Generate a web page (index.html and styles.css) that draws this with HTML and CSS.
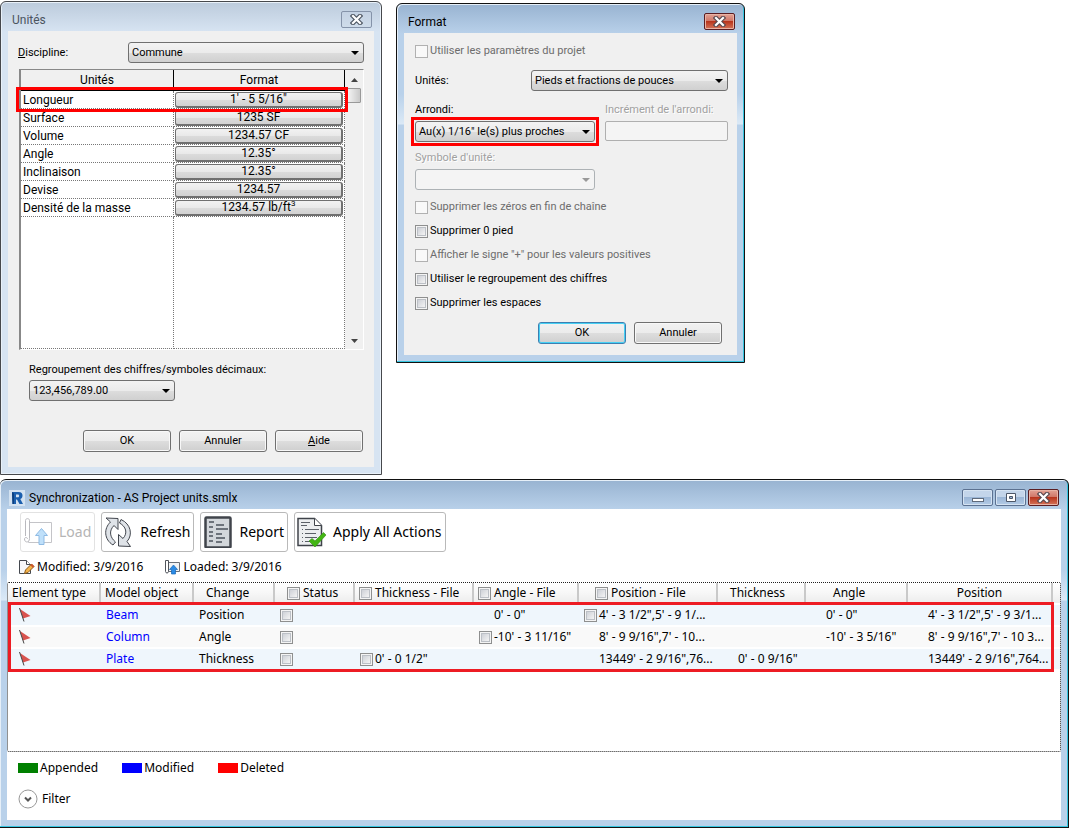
FILE: index.html
```html
<!DOCTYPE html>
<html lang="fr">
<head>
    <meta charset="UTF-8">
    <meta name="viewport" content="width=device-width, initial-scale=1.0">
    <title>Synchronization - AS Project units</title>
    <link rel="stylesheet" href="styles.css">
</head>
<body>

    <div class="dialogs">
        <section class="window inactive units">
            <header class="titlebar">
                <h2>Unités</h2>
                <button class="win-btn" aria-label="Fermer">
                    <svg width="13" height="11" viewBox="0 0 13 11"><path d="M3 2l7 7M10 2L3 9" stroke="#4f5864" stroke-width="4.500" stroke-linecap="square"/><path d="M3 2l7 7M10 2L3 9" stroke="#fff" stroke-width="2.200" stroke-linecap="square"/></svg>
                </button>
            </header>
            <div class="client">
                <div class="field">
                    <label for="discipline"><u>D</u>iscipline:</label>
                    <select id="discipline"><option>Commune</option></select>
                </div>

                <div class="grid-box">
                    <table class="units-table">
                        <thead>
                            <tr><th>Unités</th><th>Format</th></tr>
                        </thead>
                        <tbody>
                            <tr class="marked"><td>Longueur</td><td><button>1' - 5 5/16"</button></td></tr>
                            <tr><td>Surface</td><td><button>1235 SF</button></td></tr>
                            <tr><td>Volume</td><td><button>1234.57 CF</button></td></tr>
                            <tr><td>Angle</td><td><button>12.35°</button></td></tr>
                            <tr><td>Inclinaison</td><td><button>12.35°</button></td></tr>
                            <tr><td>Devise</td><td><button>1234.57</button></td></tr>
                            <tr><td>Densité de la masse</td><td><button>1234.57 lb/ft<sup>3</sup></button></td></tr>
                            <tr class="filler"><td></td><td></td></tr>
                        </tbody>
                    </table>
                    <div class="scrollbar">
                        <svg width="7" height="4" viewBox="0 0 7 4"><path d="M0 4L3.500 0 7 4z" fill="#444"/></svg>
                        <div class="thumb"></div>
                        <svg width="7" height="4" viewBox="0 0 7 4"><path d="M0 0h7L3.500 4z" fill="#444"/></svg>
                    </div>
                </div>

                <div class="grouping">
                    <label for="grouping">Re<u>g</u>roupement des chiffres/symboles décimaux:</label>
                    <select id="grouping"><option>123,456,789.00</option></select>
                </div>

                <div class="actions">
                    <button class="btn">OK</button>
                    <button class="btn">Annuler</button>
                    <button class="btn"><u>A</u>ide</button>
                </div>
            </div>
        </section>

        <section class="window format">
            <header class="titlebar">
                <h2>Format</h2>
                <button class="win-btn close" aria-label="Fermer">
                    <svg width="13" height="11" viewBox="0 0 13 11"><path d="M3 2l7 7M10 2L3 9" stroke="#5a4a50" stroke-width="4.500" stroke-linecap="square"/><path d="M3 2l7 7M10 2L3 9" stroke="#fff" stroke-width="2.200" stroke-linecap="square"/></svg>
                </button>
            </header>
            <div class="client">
                <label class="check off"><input type="checkbox" disabled>Utiliser les paramètres du projet</label>
                <div class="field">
                    <label for="unites">Unités:</label>
                    <select id="unites"><option>Pieds et fractions de pouces</option></select>
                </div>
                <div class="rounding">
                    <div class="stack">
                        <label for="arrondi">Arrondi:</label>
                        <div class="marked">
                            <select id="arrondi"><option>Au(x) 1/16" le(s) plus proches</option></select>
                        </div>
                    </div>
                    <div class="stack">
                        <label class="faded" for="increment">Incrément de l'arrondi:</label>
                        <input id="increment" type="text" disabled>
                    </div>
                    <div class="stack">
                        <label class="faded" for="symbole">Symbole d'unité:</label>
                        <select id="symbole" disabled></select>
                    </div>
                </div>
                <div class="checks">
                    <label class="check off"><input type="checkbox" disabled>Supprimer les zéros en fin de chaîne</label>
                    <label class="check"><input type="checkbox">Supprimer 0 pied</label>
                    <label class="check off"><input type="checkbox" disabled>Afficher le signe "+" pour les valeurs positives</label>
                    <label class="check"><input type="checkbox">Utiliser le regroupement des chiffres</label>
                    <label class="check"><input type="checkbox">Supprimer les espaces</label>
                </div>
                <div class="actions">
                    <button class="btn default">OK</button>
                    <button class="btn">Annuler</button>
                </div>
            </div>
        </section>
    </div>

    <section class="window sync" lang="en">
        <header class="titlebar">
            <svg class="logo" width="16" height="16" viewBox="0 0 16 16">
                <path d="M0 0h16v16H0z" fill="#d3e2f1"/>
                <path d="M3 2h6.500c3 0 4 1.800 4 3.600S12.800 8.600 11.300 9L14 14h-3.500L8 9.500H7V14H3.500z" fill="#1b5fae"/>
                <path d="M7 4.500h2c1.500 0 1.500 2.800 0 2.800H7z" fill="#d3e2f1"/>
                <path d="M3 2l2 1.500V14H3.500z" fill="#0c3f7f"/>
            </svg>
            <h2>Synchronization - AS Project units.smlx</h2>
            <div class="win-btns">
                <button class="win-btn blue" aria-label="Minimize">
                    <svg width="12" height="10" viewBox="0 0 12 10"><rect x=".5" y="5.500" width="11" height="3" fill="#fff" stroke="#5f6b7c"/></svg>
                </button>
                <button class="win-btn blue" aria-label="Maximize">
                    <svg width="12" height="10" viewBox="0 0 12 10"><path d="M1.500 .5h9v8h-9zM4.500 3.500v2h3v-2z" fill="#fff" fill-rule="evenodd" stroke="#4c5768"/></svg>
                </button>
                <button class="win-btn close" aria-label="Close">
                    <svg width="13" height="11" viewBox="0 0 13 11"><path d="M3 2l7 7M10 2L3 9" stroke="#5a4a50" stroke-width="4.500" stroke-linecap="square"/><path d="M3 2l7 7M10 2L3 9" stroke="#fff" stroke-width="2.200" stroke-linecap="square"/></svg>
                </button>
            </div>
        </header>
        <div class="client">
            <div class="toolbar">
                <button class="tool" disabled>
                    <svg width="32" height="32" viewBox="0 0 32 32">
                        <path d="M6.500 6.500h23v20h-23z" fill="#fff" stroke="#c4c4c8"/>
                        <path d="M3.500 4.500c0-2.500 4-2.500 4 0v18c0 4.500-5 4.500-5 .5 0-2 3-2 3 0" fill="#fff" stroke="#b9b9be"/>
                        <path d="M3.500 4.500V20" stroke="#b9b9be"/>
                        <path d="M19.500 12.500l6 7h-3.500v9h-5v-9h-3.500z" fill="#bfe0fa" stroke="#8fbbe4"/>
                    </svg>
                    Load
                </button>
                <button class="tool">
                    <svg width="32" height="32" viewBox="0 0 32 32">
                        <path d="M3 2l12 .5v11l-4-4C5.500 15 7 21.500 12.500 26l-2.500 3C1 23.500.5 12.500 7.500 6z" fill="#dfe3e8" stroke="#42464e" stroke-linejoin="round"/>
                        <path d="M18 3.500c10 4.500 12 15.500 6 22l3.500 5-12-.5V18.500l4.500 4C25 17 23 10.500 16.500 7z" fill="#dfe3e8" stroke="#42464e" stroke-linejoin="round"/>
                    </svg>
                    Refresh
                </button>
                <button class="tool">
                    <svg width="32" height="32" viewBox="0 0 32 32">
                        <rect x="3.500" y="1.500" width="25" height="30" rx="1" fill="#d3d7db" stroke="#40444b" stroke-width="2.500"/>
                        <path d="M7 6h5M14 9h8M7 11h4M14 13h12M7 16h4M7 20h4M14 18h6M14 22h9M7 25h4M14 26h6" stroke="#6d737b" stroke-width="2"/>
                    </svg>
                    Report
                </button>
                <button class="tool">
                    <svg width="32" height="32" viewBox="0 0 32 32">
                        <path d="M2 2.500h16.500l7 7v20H2z" fill="#eceef0" stroke="#3f434a" stroke-width="1.500"/>
                        <path d="M18.500 2.500v7h7" fill="#fff" stroke="#3f434a"/>
                        <path d="M5 6.500h9M5 9.500h6M9 13.500h14M9 17.500h11M9 21.500h12M9 25.500h6" stroke="#5b6068"/>
                        <path d="M6.500 13v14" stroke="#5b6068" stroke-dasharray="1 3"/>
                        <path d="M13 25l3-2.500 3 2.500 8.500-8.500 2.500 2.500-11 12z" fill="#43b514" stroke="#2f8d0c" stroke-width=".6"/>
                    </svg>
                    Apply All Actions
                </button>
            </div>

            <div class="status">
                <span class="stamp">
                    <svg width="17" height="16" viewBox="0 0 17 16">
                        <path d="M1.500 1.500h7l4 4v9h-11z" fill="#f6f7f9" stroke="#44484f"/>
                        <path d="M8.500 1.500v4h4" fill="#fff" stroke="#44484f"/>
                        <path d="M6.500 14.500l1-3.500 6-6 2.500 2.500-6 6z" fill="#f3b34a" stroke="#8b5a1c"/>
                        <path d="M13 5.500l2.500 2.500" stroke="#d0562c" stroke-width="2"/>
                    </svg>
                    Modified: 3/9/2016
                </span>
                <span class="stamp">
                    <svg width="17" height="16" viewBox="0 0 17 16">
                        <path d="M3.500 3.500h12v9h-12z" fill="#f1f3f5" stroke="#6b7078"/>
                        <path d="M1.500 1.500h3v11c0 2-3 2-3 0z" fill="#fff" stroke="#50545b"/>
                        <path d="M9.500 6l4 4.500h-2V15h-4v-4.500h-2z" fill="#2b8be6" stroke="#1767b8" stroke-width=".7"/>
                    </svg>
                    Loaded: 3/9/2016
                </span>
            </div>

            <div class="list">
                <table class="sync-table">
                    <colgroup>
                        <col class="w-type"><col class="w-model"><col class="w-change"><col class="w-status">
                        <col class="w-thick-file"><col class="w-angle-file"><col class="w-pos-file">
                        <col class="w-thick"><col class="w-angle"><col class="w-pos"><col>
                    </colgroup>
                    <thead>
                        <tr>
                            <th>Element type</th>
                            <th>Model object</th>
                            <th class="mid">Change</th>
                            <th class="mid"><label><input type="checkbox">Status</label></th>
                            <th><label><input type="checkbox">Thickness - File</label></th>
                            <th><label><input type="checkbox">Angle - File</label></th>
                            <th class="wide"><label><input type="checkbox">Position - File</label></th>
                            <th class="mid">Thickness</th>
                            <th class="far">Angle</th>
                            <th class="center">Position</th>
                            <th></th>
                        </tr>
                    </thead>
                    <tbody>
                        <tr>
                            <td class="flag"><svg width="12" height="14" viewBox="0 0 12 14"><path d="M1 1l10.500 7L4 10.500z" fill="#d9534f"/><path d="M.5 0L5 13.500" stroke="#444"/></svg></td>
                            <td><span class="modified">Beam</span></td>
                            <td>Position</td>
                            <td><input type="checkbox" aria-label="Status Beam"></td>
                            <td></td>
                            <td class="text">0' - 0"</td>
                            <td><label><input type="checkbox">4' - 3 1/2",5' - 9 1/...</label></td>
                            <td></td>
                            <td class="text">0' - 0"</td>
                            <td class="text">4' - 3 1/2",5' - 9 3/1...</td>
                            <td></td>
                        </tr>
                        <tr>
                            <td class="flag"><svg width="12" height="14" viewBox="0 0 12 14"><path d="M1 1l10.500 7L4 10.500z" fill="#d9534f"/><path d="M.5 0L5 13.500" stroke="#444"/></svg></td>
                            <td><span class="modified">Column</span></td>
                            <td>Angle</td>
                            <td><input type="checkbox" aria-label="Status Column"></td>
                            <td></td>
                            <td><label><input type="checkbox">-10' - 3 11/16"</label></td>
                            <td class="text">8' - 9 9/16",7' - 10...</td>
                            <td></td>
                            <td class="text">-10' - 3 5/16"</td>
                            <td class="text">8' - 9 9/16",7' - 10 3...</td>
                            <td></td>
                        </tr>
                        <tr>
                            <td class="flag"><svg width="12" height="14" viewBox="0 0 12 14"><path d="M1 1l10.500 7L4 10.500z" fill="#d9534f"/><path d="M.5 0L5 13.500" stroke="#444"/></svg></td>
                            <td><span class="modified">Plate</span></td>
                            <td>Thickness</td>
                            <td><input type="checkbox" aria-label="Status Plate"></td>
                            <td><label><input type="checkbox">0' - 0 1/2"</label></td>
                            <td></td>
                            <td class="text">13449' - 2 9/16",76...</td>
                            <td class="text">0' - 0 9/16"</td>
                            <td></td>
                            <td class="text">13449' - 2 9/16",764...</td>
                            <td></td>
                        </tr>
                    </tbody>
                </table>
            </div>

            <ul class="legend">
                <li class="appended">Appended</li>
                <li class="changed">Modified</li>
                <li class="deleted">Deleted</li>
            </ul>

            <button class="filter">
                <svg width="20" height="20" viewBox="0 0 20 20"><circle cx="10" cy="10" r="9" fill="#fff" stroke="#999"/><path d="M7 8.500l3 3 3-3" fill="none" stroke="#555" stroke-width="2"/></svg>
                Filter
            </button>
        </div>
    </section>

</body>
</html>
```
FILE: styles.css
```css
* {
    box-sizing: border-box;
    margin: 0;
    padding: 0;
}

body {
    background-color: #fff;
    color: #000;
    font-family: Roboto, sans-serif;
    font-size: 11px;
    line-height: 14px;
}

button,
select,
input {
    font: inherit;
    color: inherit;
}

.dialogs {
    display: flex;
    align-items: flex-start;
    gap: 14px;
    padding-top: 1px;
}

/* window frame */
.window {
    background: linear-gradient(#98b3d1, #b9d1ea 30px, #b9d1ea 90px, #dbe9f6 120px, #b9d1ea 121px);
    border: 1px solid #111;
    border-radius: 6px 6px 0 0;
    box-shadow: inset -1px -1px 0 #35c5e0, inset 1px 1px 0 #e6eff8;
    padding: 0 7px 7px;
}

.window.inactive {
    background: linear-gradient(#bccbdc, #d7e4f2 30px);
    border-color: #46484c;
    box-shadow: inset 0 0 0 1px #e9f1f9;
}

.titlebar {
    display: flex;
    align-items: center;
    justify-content: space-between;
    height: 29px;
    padding: 6px 2px 0 4px;
}

.titlebar h2 {
    font-size: 12px;
    font-weight: normal;
}

.inactive .titlebar h2 {
    color: #4b545f;
}

.win-btn {
    display: flex;
    align-items: center;
    justify-content: center;
    width: 31px;
    height: 17px;
    border: 1px solid #8593a9;
    border-radius: 2px;
    background: linear-gradient(#c4d2e3, #cfdcea);
}

.win-btn.blue {
    border-color: #5b7191;
    background: linear-gradient(#c3d5ea 45%, #9bb6d6 50%, #b3cbe6);
    box-shadow: inset 0 0 0 1px #d5e3f2;
}

.win-btn.close {
    border-color: #5a1d22;
    background: linear-gradient(#e2a295, #cf7566 48%, #b8351d 50%, #d4745a);
    box-shadow: inset 0 0 0 1px #e8b3a5;
}

.win-btns {
    display: flex;
    gap: 2px;
    margin-left: auto;
}

.client {
    background-color: #f0f0f0;
}

/* form controls */
select {
    appearance: none;
    height: 21px;
    padding: 0 18px 0 3px;
    border: 1px solid #707070;
    border-radius: 3px;
    background:
        url("data:image/svg+xml,%3Csvg xmlns='http://www.w3.org/2000/svg' width='8' height='4'%3E%3Cpath d='M0 0h8L4 4z'/%3E%3C/svg%3E") no-repeat right 4px center,
        linear-gradient(#f3f3f3, #ebebeb 50%, #dddddd 51%, #d0d0d0);
}

select:disabled {
    border-color: #adb2b5;
    opacity: 1;
    background:
        url("data:image/svg+xml,%3Csvg xmlns='http://www.w3.org/2000/svg' width='8' height='4'%3E%3Cpath fill='%23999' d='M0 0h8L4 4z'/%3E%3C/svg%3E") no-repeat right 4px center,
        #f4f4f4;
}

input[type="text"] {
    width: 100%;
    height: 20px;
    border: 1px solid #afafaf;
    border-radius: 2px;
    background-color: #f4f4f4;
}

input[type="checkbox"] {
    appearance: none;
    flex: none;
    width: 13px;
    height: 13px;
    border: 1px solid #8e8f8f;
    background: linear-gradient(135deg, #c3c7cf, #f3f3f3 80%);
    box-shadow: inset 0 0 0 1px #f4f4f4, inset 0 0 0 2px #bcc0c6;
}

input[type="checkbox"]:disabled {
    border-color: #b1b1b1;
    background: #f9f9f9;
    box-shadow: none;
}

.btn {
    width: 88px;
    height: 22px;
    border: 1px solid #707070;
    border-radius: 3px;
    background: linear-gradient(#f2f2f2, #ebebeb 50%, #dddddd 51%, #cfcfcf);
    box-shadow: inset 0 0 0 1px #f8f8f8;
}

.btn.default {
    border-color: #3c7fb1;
    box-shadow: inset 0 0 0 1px #46d0f4;
}

.actions {
    display: flex;
    justify-content: flex-end;
    gap: 8px;
}

.field {
    display: flex;
    align-items: center;
    justify-content: space-between;
}

/* units dialog */
.units {
    flex: 0 1 382px;
}

.units .client {
    padding: 11px 10px 15px;
}

.units .field select {
    width: 236px;
}

.units .actions {
    margin-top: 29px;
    padding-right: 1px;
}

.grid-box {
    display: flex;
    margin: 6px 0 0 1px;
    border: 1px solid #888;
    border-right-color: #fff;
    border-bottom-color: #fff;
    border-left-width: 2px;
    background-color: #fff;
}

.units-table {
    flex: 1;
    table-layout: fixed;
    border-collapse: separate;
    border-spacing: 0;
    font-size: 12px;
}

.units-table th {
    height: 21px;
    font-weight: normal;
    background-color: #f0f0f0;
    border-right: 1px solid #000;
    border-bottom: 1px solid #000;
}

.units-table th:first-child {
    width: 153px;
}

.units-table td {
    height: 18px;
    padding: 0 1px 0 2px;
    line-height: 14px;
    border-right: 1px dotted #777;
    border-bottom: 1px dotted #777;
}

.units-table td + td {
    padding-left: 1px;
}

.units-table td button {
    display: block;
    width: 100%;
    height: 16px;
    line-height: 13px;
    border: 1px solid #707070;
    border-right-width: 2px;
    border-bottom-width: 2px;
    border-radius: 3px;
    background: linear-gradient(#f2f2f2, #e9e9e9 50%, #dcdcdc 51%, #d2d2d2);
}

.units-table sup {
    font-size: 8px;
    line-height: 0;
}

.units-table .filler td {
    height: 132px;
}

.units-table .marked {
    position: relative;
}

.units-table .marked::after {
    content: "";
    position: absolute;
    inset: -4px -3px -3px -5px;
    z-index: 1;
    border: 3px solid #f00;
}

.scrollbar {
    display: flex;
    flex-direction: column;
    align-items: center;
    width: 18px;
    padding: 8px 0 6px;
    background-color: #f0f0f0;
}

.scrollbar .thumb {
    width: 14px;
    height: 15px;
    margin: 6px 0 auto;
    border: 1px solid #999;
    border-radius: 1px;
    background: linear-gradient(to right, #f3f3f3, #c9c9c9);
}

.grouping {
    display: flex;
    flex-direction: column;
    align-items: flex-start;
    gap: 3px;
    padding: 13px 10px 0 11px;
}

.grouping select {
    width: 146px;
}

/* format dialog */
.format {
    flex: 0 1 349px;
    margin-top: 2px;
}

.format .client {
    padding: 11px 9px 11px 11px;
}

.format .field {
    margin-top: 12px;
}

.format .field select {
    width: 197px;
}

.check {
    display: flex;
    align-items: center;
    gap: 2px;
}

.off {
    color: #6d6d6d;
}

.faded {
    color: #a0a0a0;
    text-shadow: 1px 1px 0 #fff;
}

.rounding {
    display: grid;
    grid-template-columns: 180px 1fr;
    gap: 9px 10px;
    margin-top: 12px;
}

.stack {
    display: flex;
    flex-direction: column;
    gap: 4px;
}

.stack .marked {
    display: flex;
    outline: 3px solid #f00;
    outline-offset: 1px;
}

.stack select {
    flex: 1 0 21px;
    width: 100%;
}

.checks {
    display: flex;
    flex-direction: column;
    gap: 10px;
    margin: 10px 0 12px;
}

.format .actions {
    padding-right: 6px;
}

/* synchronization window */
.sync {
    margin-top: 4px;
    margin-right: 1px;
    border-left: 0;
    font-size: 12px;
    line-height: 16px;
}

.sync .titlebar {
    justify-content: flex-start;
    gap: 4px;
    padding-left: 2px;
}

.sync .client {
    padding-bottom: 11px;
    background-color: #fff;
    font-family: "Noto Sans", sans-serif;
}

.toolbar {
    display: flex;
    gap: 6px;
    padding: 3px 13px 0;
}

.tool {
    display: flex;
    align-items: center;
    gap: 5px;
    height: 40px;
    padding: 0 3px 0 1px;
    font-size: 14px;
    border: 1px solid #b9b9b9;
    border-radius: 3px;
    background-color: #fff;
}

.tool:disabled {
    color: #b5b5b5;
    border-color: #e2e2e2;
}

.status {
    display: flex;
    gap: 21px;
    padding: 7px 11px;
}

.stamp {
    display: flex;
    align-items: center;
    gap: 2px;
}

.list {
    min-height: 170px;
    border: 1px dotted #222;
    border-radius: 2px;
}

.sync-table {
    position: relative;
    width: 100%;
    table-layout: fixed;
    border-collapse: separate;
    border-spacing: 0;
    white-space: nowrap;
}

.sync-table::after {
    content: "";
    position: absolute;
    inset: 19px 6px -3px 0;
    border: 3px solid #ed1c24;
    pointer-events: none;
}

.w-type,
.w-model {
    width: 93px;
}

.w-change {
    width: 81px;
}

.w-status {
    width: 80px;
}

.w-thick-file {
    width: 119px;
}

.w-angle-file {
    width: 105px;
}

.w-pos-file {
    width: 139px;
}

.w-thick {
    width: 88px;
}

.w-angle {
    width: 102px;
}

.w-pos {
    width: 145px;
}

.sync-table th {
    height: 20px;
    padding-left: 4px;
    font-weight: normal;
    text-align: left;
    border-right: 2px solid #c9c9c9;
    background: linear-gradient(#fff, #f7f7f7 50%, #ececec);
}

.sync-table th:last-child {
    border-right: 0;
}

.sync-table th.mid {
    padding-left: 12px;
}

.sync-table th.wide {
    padding-left: 16px;
}

.sync-table th.far {
    padding-left: 27px;
}

.sync-table th.center {
    padding-left: 0;
    text-align: center;
}

.sync-table label {
    display: flex;
    align-items: center;
    gap: 3px;
}

.sync-table td {
    height: 22px;
    padding-left: 5px;
    border-top: 2px solid #fff;
    background-color: #eff6fc;
}

.sync-table td label {
    gap: 2px;
}

.sync-table tr:nth-child(even) td {
    background-color: #f9f9f9;
}

.sync-table td input {
    display: block;
}

.sync-table td.text {
    padding-left: 20px;
}

.sync-table td.flag {
    padding-left: 11px;
}

.flag svg {
    display: block;
}

.modified {
    color: #00f;
}

.legend {
    display: flex;
    gap: 24px;
    padding: 8px 11px;
    list-style: none;
}

.legend li {
    display: flex;
    align-items: center;
    gap: 2px;
}

.legend li::before {
    content: "";
    width: 20px;
    height: 10px;
}

.legend .appended::before {
    background-color: #008000;
}

.legend .changed::before {
    background-color: #00f;
}

.legend .deleted::before {
    background-color: #f00;
}

.filter {
    display: flex;
    align-items: center;
    gap: 4px;
    margin: 5px 11px 0;
    border: 0;
    background: none;
}
```
